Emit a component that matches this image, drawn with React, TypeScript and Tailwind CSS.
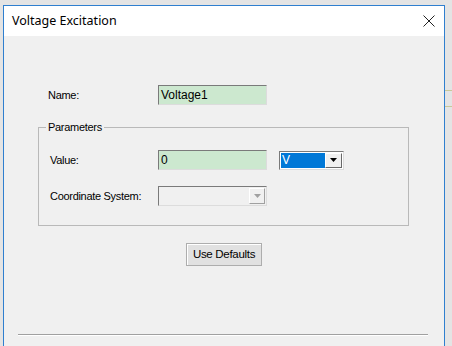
import React from 'react';

const labelFont = { fontFamily: '"Liberation Sans", Arial, sans-serif' };

function TextBox({ value }: { value: string }) {
  return (
    <div className="w-[109px] h-[20px] bg-[#cce8cf] border-t-[#7a7a7a] border-l-[#7a7a7a] border-r-[#dcdcdc] border-b-[#dcdcdc] border flex items-center pl-[2px] text-[12px] tracking-normal text-black">
      {value}
    </div>
  );
}

function Arrow({ color }: { color: string }) {
  return (
    <svg width="7" height="4" viewBox="0 0 7 4">
      <path d="M0 0 H7 L3.5 4 Z" fill={color} />
    </svg>
  );
}

export default function App() {
  return (
    <div className="w-[452px] h-[346px] bg-[#e4e4e4] flex overflow-hidden" style={labelFont}>
      <div className="ml-[3px] mt-[5px] w-[442px] h-[345px] border border-[#2f7fcf] bg-[#f0f0f0] flex flex-col shrink-0">
        {/* title bar */}
        <div className="h-[30px] bg-white flex items-center justify-between pl-[8px] pr-[9px]">
          <span className="text-[12.5px] text-black" style={{ fontFamily: '"Noto Sans", "Open Sans", sans-serif' }}>
            Voltage Excitation
          </span>
          <svg width="12" height="12" viewBox="0 0 12 12">
            <path d="M0.5 0.5 L11.5 11.5 M11.5 0.5 L0.5 11.5" stroke="#222" strokeWidth="1" />
          </svg>
        </div>

        {/* client */}
        <div className="flex flex-col text-[11px] tracking-[-0.3px] text-black">
          <div className="flex items-center mt-[49px] pl-[44px]">
            <span className="w-[110px]">Name:</span>
            <TextBox value="Voltage1" />
          </div>

          <div className="relative ml-[34px] mt-[22px] w-[371px] h-[99px] border border-[#b9b9b9]">
            <span className="absolute -top-[8px] left-[7px] px-[2px] bg-[#f0f0f0] leading-[14px]">Parameters</span>

            <div className="flex items-center mt-[22px] pl-[11px]">
              <span className="w-[108px]">Value:</span>
              <TextBox value="0" />
              <div className="ml-[12px] w-[65px] h-[19px] border border-t-[#7a7a7a] border-l-[#7a7a7a] border-r-[#dcdcdc] border-b-[#dcdcdc] bg-white flex p-[1px]">
                <div className="flex-1 bg-[#0078d7] text-white text-[12px] leading-[15px] pl-[1px]">V</div>
                <div className="w-[17px] bg-[#f0f0f0] border border-t-white border-l-white border-r-[#696969] border-b-[#696969] flex items-center justify-center">
                  <Arrow color="#000" />
                </div>
              </div>
            </div>

            <div className="flex items-center mt-[16px] pl-[11px]">
              <span className="w-[108px]">Coordinate System:</span>
              <div className="w-[109px] h-[20px] border border-t-[#7a7a7a] border-l-[#7a7a7a] border-r-[#dcdcdc] border-b-[#dcdcdc] bg-[#f0f0f0] flex justify-end p-[1px]">
                <div className="w-[16px] border border-t-white border-l-white border-r-[#a0a0a0] border-b-[#a0a0a0] flex items-center justify-center">
                  <Arrow color="#a0a0a0" />
                </div>
              </div>
            </div>
          </div>

          <div className="flex mt-[17px] pl-[182px]">
            <button className="w-[76px] h-[23px] bg-[#e1e1e1] border border-[#adadad] text-[11.5px] text-black shadow-[inset_1px_1px_0_#fff]">
              Use Defaults
            </button>
          </div>

          <div className="mt-[68px] ml-[14px] w-[410px] border-t border-[#a0a0a0] border-b-white border-b h-0" />
        </div>
      </div>
      <div className="flex-1 flex flex-col">
        <div className="h-[90px]" />
        <div className="h-px bg-[#c8c89a]" />
        <div className="h-[15px]" />
        <div className="h-px bg-[#c8c89a]" />
      </div>
    </div>
  );
}
